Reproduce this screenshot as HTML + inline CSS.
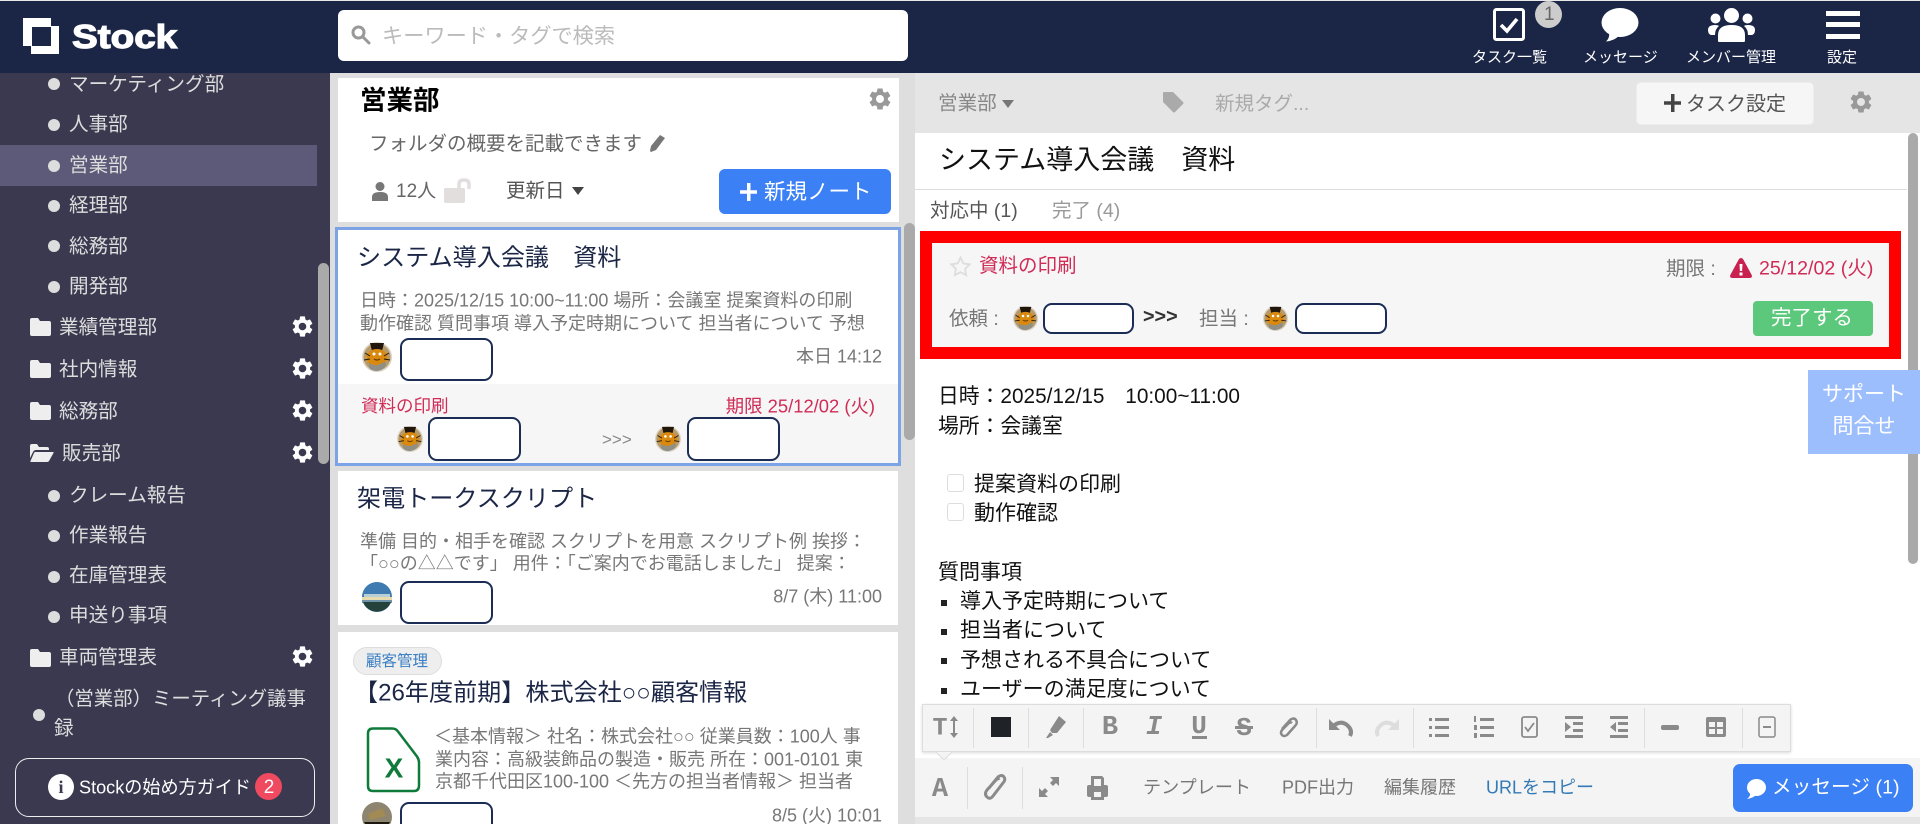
<!DOCTYPE html>
<html lang="ja"><head><meta charset="utf-8"><title>Stock</title>
<style>
html,body{margin:0;padding:0;width:1920px;height:824px;overflow:hidden;background:#dedede}
body{position:relative;font-family:"Liberation Sans","Noto Sans CJK JP",sans-serif;color:#333}
.b{position:absolute;box-sizing:border-box}
.t{position:absolute;white-space:nowrap;line-height:1;transform:translateY(calc(-50% + 1.500px))}
.r{transform:translate(-100%,calc(-50% + 1.500px))}
.c{transform:translate(-50%,calc(-50% + 1.500px))}
svg.i{position:absolute;overflow:visible}
.s{color:#ddd;font-size:19.600px;margin-top:1px}
.d{position:absolute;width:12px;height:12px;border-radius:50%;background:#ddd;margin:-6px 0 0 -6px}
.box{position:absolute;box-sizing:border-box;background:#fff;border:2.500px solid #1b2d55;border-radius:9px}
.g{color:#777;font-size:18px}
.n{color:#1b2646;font-size:24.100px}
.cr{color:#d02c57}
.sep{position:absolute;width:1px;background:#ddd}
.tb{position:absolute;color:#8a8a8a;line-height:1;transform:translate(-50%,calc(-50% + 1px))}
.line{color:#111;font-size:21px}
</style></head><body>
<svg width="0" height="0" style="position:absolute">
<defs>
<symbol id="gear" viewBox="2 2 20 20"><path fill-rule="evenodd" d="M19.14 12.94c.04-.3.06-.61.06-.94 0-.32-.02-.64-.07-.94l2.03-1.58c.18-.14.23-.41.12-.61l-1.92-3.32c-.12-.22-.37-.29-.59-.22l-2.39.96c-.5-.38-1.03-.7-1.62-.94l-.36-2.54c-.04-.24-.24-.41-.48-.41h-3.84c-.24 0-.43.17-.47.41l-.36 2.54c-.59.24-1.13.57-1.62.94l-2.39-.96c-.22-.08-.47 0-.59.22L2.74 8.87c-.12.21-.08.47.12.61l2.03 1.58c-.05.3-.09.63-.09.94s.02.64.07.94l-2.03 1.58c-.18.14-.23.41-.12.61l1.92 3.32c.12.22.37.29.59.22l2.39-.96c.5.38 1.03.7 1.62.94l.36 2.54c.05.24.24.41.48.41h3.84c.24 0 .44-.17.47-.41l.36-2.54c.59-.24 1.13-.56 1.62-.94l2.39.96c.22.08.47 0 .59-.22l1.92-3.32c.12-.22.07-.47-.12-.61l-2.01-1.58zM12 15.6c-1.98 0-3.6-1.62-3.6-3.6s1.62-3.6 3.6-3.6 3.6 1.62 3.6 3.6-1.62 3.6-3.6 3.6z"/></symbol>
<symbol id="folder" viewBox="0 0 21 18"><path d="M2 0h6l2 3h9a2 2 0 0 1 2 2v11a2 2 0 0 1-2 2H2a2 2 0 0 1-2-2V2a2 2 0 0 1 2-2z"/></symbol>
<symbol id="bee" viewBox="0 0 30 30"><circle cx="15" cy="15" r="15" fill="#dcd3c4"/><circle cx="15" cy="15" r="13.500" fill="#b89a68"/><path d="M8 1h14l-2 8H10z" fill="#20160c"/><ellipse cx="15" cy="15.500" rx="10.500" ry="8.500" fill="#d98a0e"/><circle cx="12" cy="12" r="1.500" fill="#fff"/><circle cx="18" cy="12" r="1.500" fill="#fff"/><path d="M12 17q3 2 6 0" stroke="#6b3c05" stroke-width="1.200" fill="none"/><path d="M7 21q8 5 16-2l1 4q-2 5-9 6q-5 0-8-3z" fill="#8f8f86"/><path d="M3 11l5 3M27 11l-5 3M2 18l6-1M28 18l-6-1" stroke="#20160c" stroke-width="1"/></symbol>
<symbol id="sea" viewBox="0 0 30 30"><circle cx="15" cy="15" r="15" fill="#3f7ab0"/><path d="M2 12h26v3H2z" fill="#b9cfd8"/><path d="M0 15h30v3H0z" fill="#e8dcae"/><path d="M0 18h30v3H0z" fill="#6f93a8"/><path d="M1 20h28a15 15 0 0 1-28 0z" fill="#24423a"/></symbol>
<symbol id="photo" viewBox="0 0 30 30"><circle cx="15" cy="15" r="15" fill="#8d8570"/><path d="M2 20h26a15 15 0 0 1-26 0z" fill="#1d180f"/><path d="M6 12l14-6 4 8-16 4z" fill="#a28a55"/></symbol>
</defs></svg>

<!-- header -->
<div class="b" style="left:0;top:0;width:1920px;height:1px;background:#e8e8e8"></div>
<div class="b" style="left:0;top:1px;width:1920px;height:72px;background:#1b2646"></div>
<svg class="i" style="left:23px;top:18px" width="36" height="36"><path fill="#fff" d="M0 0h28v8h8v28H8v-8H0z"/><path fill="#1b2646" d="M9 9h19v19H9z"/></svg>
<div class="t" style="left:72px;top:34.500px;font-size:33px;font-weight:bold;color:#fff;-webkit-text-stroke:1.200px #fff;transform-origin:0 50%;transform:translateY(calc(-50% + 1.500px)) scaleX(1.170)">Stock</div>
<div class="b" style="left:338px;top:10px;width:570px;height:51px;background:#fff;border-radius:6px"></div>
<svg class="i" style="left:351px;top:25px" width="19" height="19" fill="none" stroke="#999" stroke-width="3"><circle cx="7.500" cy="7.500" r="5.500"/><path d="M12 12l6 6" stroke-linecap="round"/></svg>
<div class="t" style="left:382px;top:35px;font-size:21.200px;color:#bbb">キーワード・タグで検索</div>

<svg class="i" style="left:1493px;top:8px" width="33" height="34" fill="none" stroke="#fff"><rect x="1.500" y="1.500" width="29" height="30" rx="2" stroke-width="3"/><path d="M8 17l6 6 10-12" stroke-width="3.600"/></svg>
<div class="b" style="left:1535px;top:1px;width:27px;height:27px;border-radius:50%;background:#ccc"></div>
<div class="t" style="left:1544px;top:13px;font-size:19px;color:#666">1</div>
<svg class="i" style="left:1601px;top:8px" width="38" height="34" fill="#fff"><ellipse cx="19" cy="14.500" rx="18.500" ry="14.500"/><path d="M8 24q1 6-3 9.500q9-1 13-6z"/></svg>
<svg class="i" style="left:1708px;top:8px" width="47" height="34" fill="#fff"><circle cx="23.500" cy="7.500" r="7.500"/><circle cx="7.500" cy="10.500" r="5"/><circle cx="39.500" cy="10.500" r="5"/><path d="M10 33v-6q0-10 13.500-10t13.500 10v6q0 1-2 1H12q-2 0-2-1z"/><path d="M0 22q0-5 7-5q3 0 4 1q-4 3-4 9H3q-3-1-3-5zM47 22q0-5-7-5q-3 0-4 1q4 3 4 9h4q3-1 3-5z"/></svg>
<div class="b" style="left:1826px;top:11px;width:34px;height:4.500px;background:#fff"></div>
<div class="b" style="left:1826px;top:22px;width:34px;height:5px;background:#fff"></div>
<div class="b" style="left:1826px;top:34px;width:34px;height:5px;background:#fff"></div>
<div class="t" style="left:1472px;top:55.500px;font-size:15px;color:#fff">タスク一覧</div>
<div class="t" style="left:1583px;top:55.500px;font-size:15px;color:#fff">メッセージ</div>
<div class="t" style="left:1686px;top:55.500px;font-size:15px;color:#fff">メンバー管理</div>
<div class="t" style="left:1827px;top:55.500px;font-size:15px;color:#fff">設定</div>

<!-- sidebar -->
<div class="b" style="left:0;top:73px;width:330px;height:751px;background:#3b3950"></div>
<div class="b" style="left:0;top:145px;width:317px;height:41px;background:#5c5a78"></div>
<div class="b" style="left:318px;top:263px;width:11px;height:201px;background:#aaa;border-radius:6px"></div>
<div class="d" style="left:54px;top:84px"></div><div class="t s" style="left:69px;top:83px">マーケティング部</div>
<div class="d" style="left:54px;top:125px"></div><div class="t s" style="left:69px;top:123px">人事部</div>
<div class="d" style="left:54px;top:166px"></div><div class="t s" style="left:69px;top:164px">営業部</div>
<div class="d" style="left:54px;top:206px"></div><div class="t s" style="left:69px;top:204px">経理部</div>
<div class="d" style="left:54px;top:246px"></div><div class="t s" style="left:69px;top:245px">総務部</div>
<div class="d" style="left:54px;top:287px"></div><div class="t s" style="left:69px;top:285px">開発部</div>
<svg class="i" style="left:30px;top:318px" width="21" height="18" fill="#eee"><use href="#folder"/></svg><div class="t s" style="left:59px;top:326px">業績管理部</div>
<svg class="i" style="left:292px;top:316px" width="21" height="21" fill="#fff"><use href="#gear"/></svg>
<svg class="i" style="left:30px;top:360px" width="21" height="18" fill="#eee"><use href="#folder"/></svg><div class="t s" style="left:59px;top:368px">社内情報</div>
<svg class="i" style="left:292px;top:358px" width="21" height="21" fill="#fff"><use href="#gear"/></svg>
<svg class="i" style="left:30px;top:402px" width="21" height="18" fill="#eee"><use href="#folder"/></svg><div class="t s" style="left:59px;top:410px">総務部</div>
<svg class="i" style="left:292px;top:400px" width="21" height="21" fill="#fff"><use href="#gear"/></svg>
<svg class="i" style="left:30px;top:444px" width="24" height="18" fill="#eee"><path d="M0 2q0-2 2-2h5l2 3h8q2 0 2 2v1H6q-2 0-3 2l-3 6zM5 8h18q1 0 .5 1L19 17q-.5 1-2 1H1q-1 0-.5-1L4 9q.5-1 1-1z"/></svg><div class="t s" style="left:62px;top:452px">販売部</div>
<svg class="i" style="left:292px;top:442px" width="21" height="21" fill="#fff"><use href="#gear"/></svg>
<div class="d" style="left:54px;top:496px"></div><div class="t s" style="left:69px;top:494px">クレーム報告</div>
<div class="d" style="left:54px;top:536px"></div><div class="t s" style="left:69px;top:534px">作業報告</div>
<div class="d" style="left:54px;top:577px"></div><div class="t s" style="left:69px;top:574px">在庫管理表</div>
<div class="d" style="left:54px;top:617px"></div><div class="t s" style="left:69px;top:614px">申送り事項</div>
<svg class="i" style="left:30px;top:649px" width="21" height="18" fill="#eee"><use href="#folder"/></svg><div class="t s" style="left:59px;top:656px">車両管理表</div>
<svg class="i" style="left:292px;top:646px" width="21" height="21" fill="#fff"><use href="#gear"/></svg>
<div class="d" style="left:39px;top:715px"></div>
<div class="t s" style="left:55px;top:697px;font-size:19.400px">（営業部）ミーティング議事</div>
<div class="t s" style="left:54px;top:727px">録</div>
<div class="b" style="left:15px;top:758px;width:300px;height:59px;border:1px solid #eee;border-radius:14px"></div>
<div class="b" style="left:48px;top:774px;width:26px;height:26px;border-radius:50%;background:#fff"></div>
<div class="t c" style="left:61px;top:786px;font:bold 18px 'Liberation Serif',serif;color:#3b3950">i</div>
<div class="t" style="left:79px;top:786px;font-size:18.100px;color:#fff">Stockの始め方ガイド</div>
<div class="b" style="left:255px;top:773px;width:27px;height:27px;border-radius:50%;background:#ef4a5f"></div>
<div class="t c" style="left:269px;top:786px;font-size:19px;color:#fff">2</div>

<!-- middle -->
<div class="b" style="left:338px;top:78px;width:561px;height:144px;background:#fff"></div>
<div class="t" style="left:360px;top:99px;font-size:26.500px;font-weight:bold;color:#000">営業部</div>
<svg class="i" style="left:869px;top:88px" width="22" height="22" fill="#999"><use href="#gear"/></svg>
<div class="t" style="left:369px;top:143px;font-size:19.500px;color:#666">フォルダの概要を記載できます</div>
<svg class="i" style="left:649px;top:134px" width="17" height="18" fill="#777"><path d="M11 1l5 3-9 12-5 2-1-1 1-5z"/></svg>
<svg class="i" style="left:372px;top:182px" width="16" height="19" fill="#777"><circle cx="8" cy="4.500" r="4.500"/><path d="M0 19v-4q0-5 8-5t8 5v4z"/></svg>
<div class="t" style="left:396px;top:190px;font-size:19px;color:#666">12人</div>
<svg class="i" style="left:444px;top:178px" width="28" height="25"><rect x="0" y="10" width="21" height="15" rx="2" fill="#e2dede"/><path d="M15 11V6q0-4 5-4t5 4v5" fill="none" stroke="#e2dede" stroke-width="3.500"/></svg>
<div class="t" style="left:506px;top:190px;font-size:19.500px;color:#555">更新日</div>
<svg class="i" style="left:572px;top:187px" width="12" height="8" fill="#444"><path d="M0 0h12L6 8z"/></svg>
<div class="b" style="left:719px;top:169px;width:172px;height:45px;background:#3b80f5;border-radius:6px"></div>
<svg class="i" style="left:740px;top:183px" width="17" height="18" fill="#fff"><path d="M7 0h3.500v7.200H17v3.500h-6.500V18H7v-7.300H0V7.200h7z"/></svg>
<div class="t" style="left:764px;top:191px;font-size:21.500px;color:#fff">新規ノート</div>

<!-- middle scrollbar -->
<div class="b" style="left:904px;top:223px;width:11px;height:217px;background:#aaa;border-radius:6px"></div>

<!-- card 1 -->
<div class="b" style="left:335px;top:227px;width:566px;height:239px;background:#fff;border:3px solid #7ba3e6"></div>
<div class="b" style="left:338px;top:384px;width:560px;height:79px;background:#f6f6f6"></div>
<div class="t n" style="left:357px;top:257px">システム導入会議　資料</div>
<div class="t g" style="left:360px;top:299px">日時：2025/12/15 10:00~11:00 場所：会議室 提案資料の印刷</div>
<div class="t g" style="left:360px;top:322px">動作確認 質問事項 導入予定時期について 担当者について 予想</div>
<svg class="i" style="left:362px;top:342px" width="30" height="30"><use href="#bee"/></svg>
<div class="box" style="left:400px;top:338px;width:93px;height:43px"></div>
<div class="t g r" style="left:882px;top:355px">本日 14:12</div>
<div class="t cr" style="left:361px;top:405px;font-size:17.500px">資料の印刷</div>
<div class="t cr r" style="left:875px;top:405px;font-size:18.400px">期限 25/12/02 (火)</div>
<svg class="i" style="left:397px;top:426px" width="26" height="26"><use href="#bee"/></svg>
<div class="box" style="left:428px;top:417px;width:93px;height:44px"></div>
<div class="t" style="left:602px;top:438px;font-size:17px;color:#888">&gt;&gt;&gt;</div>
<svg class="i" style="left:655px;top:426px" width="26" height="26"><use href="#bee"/></svg>
<div class="box" style="left:687px;top:417px;width:93px;height:44px"></div>

<!-- card 2 -->
<div class="b" style="left:338px;top:471px;width:560px;height:154px;background:#fff"></div>
<div class="t n" style="left:357px;top:498px">架電トークスクリプト</div>
<div class="t g" style="left:360px;top:540px">準備 目的・相手を確認 スクリプトを用意 スクリプト例 挨拶：</div>
<div class="t g" style="left:360px;top:562px">「○○の△△です」 用件：「ご案内でお電話しました」 提案：</div>
<svg class="i" style="left:362px;top:582px" width="30" height="30"><use href="#sea"/></svg>
<div class="box" style="left:400px;top:581px;width:93px;height:43px"></div>
<div class="t g r" style="left:882px;top:595px">8/7 (木) 11:00</div>

<!-- card 3 -->
<div class="b" style="left:338px;top:632px;width:560px;height:192px;background:#fff"></div>
<div class="b" style="left:353px;top:647px;width:89px;height:28px;background:#eee;border:1px solid #ddd;border-radius:14px"></div>
<div class="t" style="left:366px;top:660px;font-size:15.500px;color:#3a7fc4">顧客管理</div>
<div class="t n" style="left:354px;top:692px">【26年度前期】株式会社○○顧客情報</div>
<svg class="i" style="left:367px;top:727px" width="55" height="66" fill="none"><path d="M6 1.500h19q4 0 6 3l19 25q2 3 2 6v23q0 5.500-5 5.500H6q-5 0-5-5V6.500q0-5 5-5z" stroke="#0f7a3a" stroke-width="2.500"/></svg>
<div class="t c" style="left:394px;top:767px;font-size:28px;font-weight:bold;color:#0f7a3a">X</div>
<div class="t g" style="left:434px;top:735px">＜基本情報＞ 社名：株式会社○○ 従業員数：100人 事</div>
<div class="t g" style="left:435px;top:758px">業内容：高級装飾品の製造・販売 所在：001-0101 東</div>
<div class="t g" style="left:435px;top:780px">京都千代田区100-100 ＜先方の担当者情報＞ 担当者</div>
<svg class="i" style="left:362px;top:802px" width="30" height="30"><use href="#photo"/></svg>
<div class="box" style="left:400px;top:802px;width:93px;height:43px"></div>
<div class="t g r" style="left:882px;top:814px">8/5 (火) 10:01</div>

<!-- right head -->
<div class="b" style="left:915px;top:73px;width:1005px;height:60px;background:#e5e5e5"></div>
<div class="t" style="left:938px;top:103px;font-size:19.600px;color:#888">営業部</div>
<svg class="i" style="left:1002px;top:100px" width="12" height="8" fill="#777"><path d="M0 0h12L6 8z"/></svg>
<svg class="i" style="left:1163px;top:92px" width="21" height="21" fill="#aaa"><path d="M1 0h9l10 10q1 1 0 2l-8 8q-1 1-2 0L0 10V1q0-1 1-1z"/></svg>
<div class="t" style="left:1215px;top:103px;font-size:19.500px;color:#aaa">新規タグ...</div>
<div class="b" style="left:1636px;top:82px;width:178px;height:43px;background:#f6f6f6;border:1px solid #eee;border-radius:5px"></div>
<svg class="i" style="left:1664px;top:94px" width="17" height="18" fill="#444"><path d="M7 0h3.500v7.200H17v3.500h-6.500V18H7v-7.300H0V7.200h7z"/></svg>
<div class="t" style="left:1686px;top:103px;font-size:20px;color:#555">タスク設定</div>
<svg class="i" style="left:1850px;top:91px" width="22" height="22" fill="#999"><use href="#gear"/></svg>

<!-- right content -->
<div class="b" style="left:915px;top:133px;width:1005px;height:625px;background:#fff"></div>
<div class="t" style="left:939px;top:159px;font-size:27px;color:#111">システム導入会議　資料</div>
<div class="b" style="left:915px;top:189px;width:992px;height:1px;background:#ddd"></div>
<div class="t" style="left:930px;top:210px;font-size:19.500px;color:#555">対応中 (1)</div>
<div class="t" style="left:1052px;top:210px;font-size:19.500px;color:#999">完了 (4)</div>
<div class="b" style="left:1908px;top:133px;width:10px;height:431px;background:#aaa;border-radius:5px"></div>

<!-- red box -->
<div class="b" style="left:920px;top:231px;width:981px;height:128px;background:#f6f6f6;border:12px solid #f00"></div>
<svg class="i" style="left:950px;top:256px" width="21" height="20" fill="none" stroke="#ddd" stroke-width="1.800"><path d="M10.500 1.500l2.800 5.900 6.400.9-4.600 4.500 1.100 6.400-5.700-3-5.700 3 1.100-6.400L1.300 8.300l6.400-.9z"/></svg>
<div class="t cr" style="left:979px;top:265px;font-size:19.500px">資料の印刷</div>
<div class="t" style="left:1666px;top:268px;font-size:19.500px;color:#777">期限 :</div>
<svg class="i" style="left:1730px;top:258px" width="22" height="20"><path fill="#c8204f" d="M11 0q1.500 0 2.300 1.500l8.400 15.500q1 2.500-1.700 3H2q-2.700-.5-1.700-3L8.700 1.500Q9.500 0 11 0z"/><path fill="#fff" d="M9.500 6h3l-.4 7h-2.200zM9.500 14.500h3v3h-3z"/></svg>
<div class="t cr" style="left:1759px;top:268px;font-size:19.600px">25/12/02 (火)</div>
<div class="t" style="left:949px;top:318px;font-size:19.500px;color:#777">依頼 :</div>
<svg class="i" style="left:1013px;top:306px" width="25" height="25"><use href="#bee"/></svg>
<div class="box" style="left:1043px;top:303px;width:91px;height:31px"></div>
<div class="t" style="left:1143px;top:316px;font-size:19.800px;color:#333;font-weight:bold">&gt;&gt;&gt;</div>
<div class="t" style="left:1199px;top:318px;font-size:19.500px;color:#777">担当 :</div>
<svg class="i" style="left:1263px;top:306px" width="25" height="25"><use href="#bee"/></svg>
<div class="box" style="left:1295px;top:303px;width:92px;height:31px"></div>
<div class="b" style="left:1753px;top:301px;width:120px;height:35px;background:#5cc87c;border-radius:4px"></div>
<div class="t" style="left:1771px;top:317px;font-size:20.500px;color:#fff">完了する</div>

<!-- body -->
<div class="t line" style="left:938px;top:395.500px;font-size:20.800px">日時：2025/12/15　10:00~11:00</div>
<div class="t line" style="left:938px;top:425.500px;font-size:20.800px">場所：会議室</div>
<div class="b" style="left:947px;top:474px;width:17px;height:18px;border:1.500px solid #ddd;border-radius:3px"></div>
<div class="t line" style="left:974px;top:482.500px">提案資料の印刷</div>
<div class="b" style="left:947px;top:503px;width:17px;height:18px;border:1.500px solid #ddd;border-radius:3px"></div>
<div class="t line" style="left:974px;top:512px">動作確認</div>
<div class="t line" style="left:938px;top:571px">質問事項</div>
<div class="b" style="left:941px;top:600px;width:6px;height:6px;background:#222"></div>
<div class="t line" style="left:960px;top:600px">導入予定時期について</div>
<div class="b" style="left:941px;top:629px;width:6px;height:6px;background:#222"></div>
<div class="t line" style="left:960px;top:629px">担当者について</div>
<div class="b" style="left:941px;top:658px;width:6px;height:6px;background:#222"></div>
<div class="t line" style="left:960px;top:659px">予想される不具合について</div>
<div class="b" style="left:941px;top:688px;width:6px;height:6px;background:#222"></div>
<div class="t line" style="left:960px;top:688px">ユーザーの満足度について</div>

<!-- support -->
<div class="b" style="left:1808px;top:370px;width:112px;height:84px;background:#9dbefc"></div>
<div class="t c" style="left:1864px;top:393px;font-size:21px;color:#fff">サポート</div>
<div class="t c" style="left:1864px;top:425px;font-size:21px;color:#fff">問合せ</div>

<!-- bottom bar -->
<div class="b" style="left:915px;top:758px;width:1005px;height:59px;background:#f4f4f4"></div>
<div class="b" style="left:915px;top:817px;width:1005px;height:7px;background:#e5e5e5"></div>
<div class="b" style="left:922px;top:704px;width:869px;height:48px;background:#f4f4f4;border:1px solid #ddd;box-shadow:0 1px 3px rgba(0,0,0,.15)"></div>
<svg class="i" style="left:936px;top:751px" width="16" height="9"><path d="M0 1h16L8 9z" fill="#f4f4f4"/><path d="M0 1l8 8 8-8" fill="none" stroke="#ddd"/></svg>
<div class="sep" style="left:973px;top:708px;height:40px"></div>
<div class="sep" style="left:1028px;top:708px;height:40px"></div>
<div class="sep" style="left:1083px;top:708px;height:40px"></div>
<div class="sep" style="left:1316px;top:708px;height:40px"></div>
<div class="sep" style="left:1413px;top:708px;height:40px"></div>
<div class="sep" style="left:1644px;top:708px;height:40px"></div>
<div class="sep" style="left:1742px;top:708px;height:40px"></div>
<div class="tb" style="left:940px;top:727px;font:bold 25px 'Liberation Mono',monospace">T</div>
<svg class="i" style="left:950px;top:716px" width="8" height="22" fill="#8a8a8a"><path d="M4 0l4 5H5v12h3l-4 5-4-5h3V5H0z"/></svg>
<div class="b" style="left:991px;top:717px;width:20px;height:20px;background:#1f2328"></div>
<svg class="i" style="left:1046px;top:716px" width="21" height="22" fill="#8a8a8a"><path d="M13 0l7 6-9 11H6L4 14z"/><path d="M4 16l3 3-5 3h-2z"/></svg>
<div class="tb" style="left:1110px;top:727px;font:bold 27px 'Liberation Mono',monospace">B</div>
<div class="tb" style="left:1154px;top:727px;font:italic bold 27px 'Liberation Mono',monospace">I</div>
<div class="tb" style="left:1199px;top:725px;font:bold 26px 'Liberation Mono',monospace">U</div>
<div class="b" style="left:1192px;top:736px;width:15px;height:2.500px;background:#8a8a8a"></div>
<div class="tb" style="left:1244px;top:727px;font:bold 26px 'Liberation Mono',monospace">S</div>
<div class="b" style="left:1235px;top:726px;width:18px;height:2.500px;background:#8a8a8a"></div>
<svg class="i" style="left:1279px;top:716px" width="20" height="22" fill="none" stroke="#8a8a8a" stroke-width="2.500"><path d="M3 13l8-9q4-3 6 0t-1 6l-8 9q-3 2-5 0t0-5l7-7q2-1 3 0"/></svg>
<svg class="i" style="left:1329px;top:717px" width="24" height="20" fill="none" stroke="#8a8a8a" stroke-width="4"><path d="M4 9q8-6 14-1t3 11"/><path d="M0 2v11h11z" fill="#8a8a8a" stroke="none"/></svg>
<svg class="i" style="left:1375px;top:717px" width="24" height="20" fill="none" stroke="#ddd" stroke-width="4"><path d="M20 9q-8-6-14-1t-3 11"/><path d="M24 2v11H13z" fill="#ddd" stroke="none"/></svg>
<svg class="i" style="left:1429px;top:716px" width="20" height="22" fill="#8a8a8a"><path d="M6 2h14v3H6zM6 10h14v3H6zM6 18h14v3H6zM0 2h3v3H0zM0 10h3v3H0zM0 18h3v3H0z"/></svg>
<svg class="i" style="left:1474px;top:716px" width="20" height="22" fill="#8a8a8a"><path d="M6 2h14v3H6zM6 10h14v3H6zM6 18h14v3H6zM0 0h2v6H0zM0 9h3v5H0zM0 17h3v5H0z"/></svg>
<svg class="i" style="left:1521px;top:716px" width="17" height="22" fill="none" stroke="#8a8a8a" stroke-width="1.800"><rect x="1" y="1" width="15" height="20" rx="2"/><path d="M4 11l3 4 6-8"/></svg>
<svg class="i" style="left:1565px;top:716px" width="18" height="22" fill="#8a8a8a"><path d="M0 0h18v3H0zM8 6h10v3H8zM8 13h10v3H8zM0 19h18v3H0zM0 6l6 5-6 5z"/></svg>
<svg class="i" style="left:1610px;top:716px" width="18" height="22" fill="#8a8a8a"><path d="M0 0h18v3H0zM8 6h10v3H8zM8 13h10v3H8zM0 19h18v3H0zM6 6l-6 5 6 5z"/></svg>
<div class="b" style="left:1661px;top:725px;width:18px;height:5px;background:#8a8a8a;border-radius:2px"></div>
<svg class="i" style="left:1706px;top:717px" width="20" height="20" fill="#8a8a8a"><path fill-rule="evenodd" d="M2 0h16q2 0 2 2v16q0 2-2 2H2q-2 0-2-2V2q0-2 2-2zM3 5v5h6V5zM11 5v5h6V5zM3 12v5h6v-5zM11 12v5h6v-5z"/></svg>
<svg class="i" style="left:1758px;top:716px" width="18" height="22" fill="none" stroke="#8a8a8a" stroke-width="1.500"><rect x="1" y="1" width="16" height="20" rx="2"/><path d="M5 11h8" stroke-width="2"/></svg>

<div class="tb" style="left:940px;top:789px;font:bold 27px 'Liberation Mono',monospace">A</div>
<div class="sep" style="left:967px;top:767px;height:42px"></div>
<svg class="i" style="left:984px;top:774px" width="22" height="27" fill="none" stroke="#8a8a8a" stroke-width="3"><path d="M5 14l9-11q4-3 6 0t-1 6L9 22q-3 4-6 1t0-7l9-10q2-2 3 0"/></svg>
<div class="sep" style="left:1022px;top:767px;height:42px"></div>
<svg class="i" style="left:1039px;top:777px" width="20" height="20" fill="#8a8a8a"><path d="M11 0h9v9l-3-3-3 3-3-3 3-3zM0 11l3 3 3-3 3 3-3 3 3 3H0z"/></svg>
<svg class="i" style="left:1087px;top:776px" width="21" height="24" fill="#8a8a8a"><path fill-rule="evenodd" d="M4 0h11l2 2v7h2q2 0 2 2v8q0 2-2 2h-2v3H4v-3H2q-2 0-2-2v-8q0-2 2-2h2zM7 3v7h7V3zM7 16v5h7v-5z"/></svg>
<div class="t" style="left:1143px;top:786px;font-size:18.100px;color:#777">テンプレート</div>
<div class="t" style="left:1282px;top:786px;font-size:18px;color:#777">PDF出力</div>
<div class="t" style="left:1384px;top:786px;font-size:18px;color:#777">編集履歴</div>
<div class="t" style="left:1486px;top:786px;font-size:18px;color:#337ab7">URLをコピー</div>
<div class="b" style="left:1733px;top:764px;width:180px;height:48px;background:#3b80f5;border-radius:7px"></div>
<svg class="i" style="left:1746px;top:779px" width="20" height="20" fill="#fff"><ellipse cx="10.500" cy="8.500" rx="9.500" ry="8.500"/><path d="M4 13q1 4-3 7q5-1 8-3z"/></svg>
<div class="t" style="left:1772px;top:787px;font-size:19.700px;color:#fff">メッセージ (1)</div>
</body></html>
